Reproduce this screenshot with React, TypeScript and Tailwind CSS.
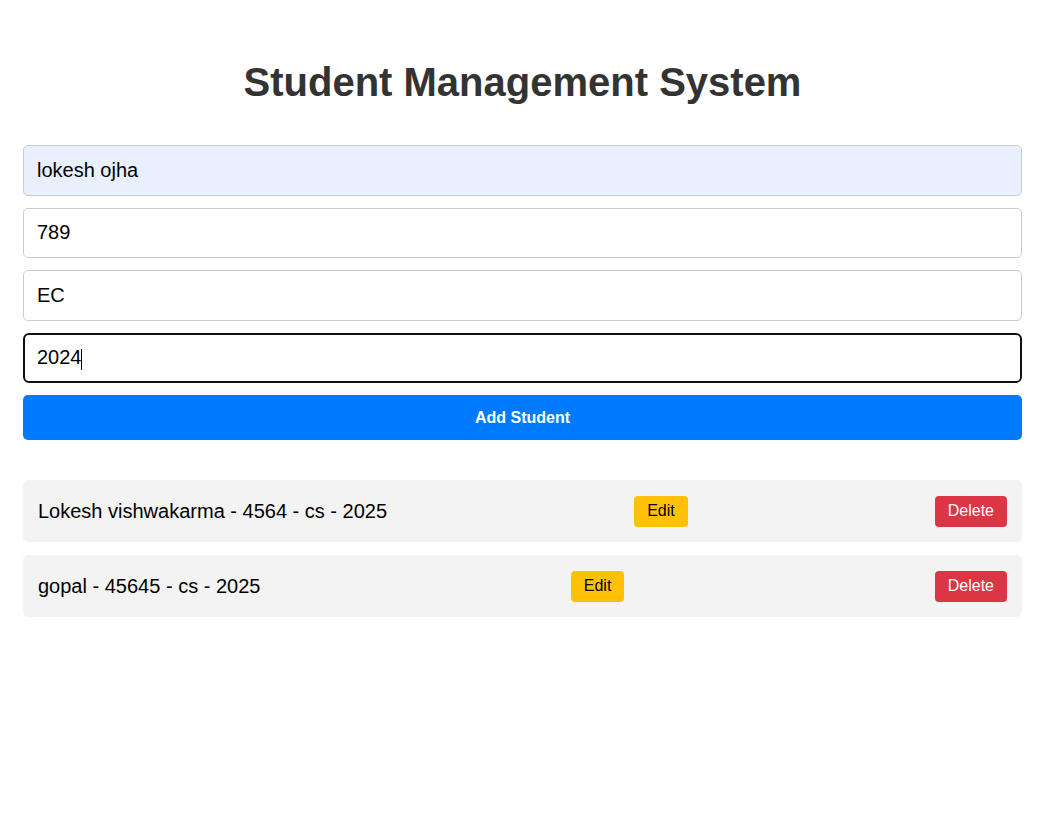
import { useState } from 'react';

interface Student {
  name: string;
  roll: string;
  branch: string;
  year: string;
}

const STUDENTS: Student[] = [
  { name: 'Lokesh vishwakarma', roll: '4564', branch: 'cs', year: '2025' },
  { name: 'gopal', roll: '45645', branch: 'cs', year: '2025' },
];

export default function App() {
  const [name, setName] = useState('lokesh ojha');
  const [roll, setRoll] = useState('789');
  const [branch, setBranch] = useState('EC');
  const [year, setYear] = useState('2024');

  const inputBase =
    'w-full h-[50.5px] px-[13px] rounded-[5px] border border-[#cccccc] text-[20px] text-black outline-none';

  return (
    <div className="min-h-screen bg-white font-['Liberation_Sans',Arial,sans-serif]">
      <div className="ml-[23px] w-[999px] pt-[59px]">
        <h1 className="text-center text-[40px] leading-[46px] font-bold text-[#333333]">
          Student Management System
        </h1>

        <form className="mt-[40px] flex flex-col gap-[12px]" onSubmit={(e) => e.preventDefault()}>
          <input
            className={`${inputBase} bg-[#e8f0fe]`}
            value={name}
            onChange={(e) => setName(e.target.value)}
          />
          <input className={inputBase} value={roll} onChange={(e) => setRoll(e.target.value)} />
          <input className={inputBase} value={branch} onChange={(e) => setBranch(e.target.value)} />
          <div className="relative">
            <input
              className="w-full h-[50.5px] px-[12px] rounded-[6px] border-2 border-[#101010] text-[20px] text-black outline-none"
              value={year}
              onChange={(e) => setYear(e.target.value)}
            />
            {/* caret */}
            <span className="absolute left-[58px] top-[16px] h-[21px] w-px bg-black" />
          </div>
          <button
            type="submit"
            className="h-[45px] w-full rounded-[5px] bg-[#007bff] text-[16px] font-bold text-white"
          >
            Add Student
          </button>
        </form>

        <ul className="mt-[40px] flex flex-col gap-[13px]">
          {STUDENTS.map((s) => (
            <li
              key={s.roll}
              className="flex h-[62px] items-center justify-between rounded-[5px] bg-[#f3f3f3] px-[15px]"
            >
              <span className="text-[20px] text-black">
                {s.name} - {s.roll} - {s.branch} - {s.year}
              </span>
              <button className="h-[31px] rounded-[4px] bg-[#ffc107] px-[13px] text-[16px] text-black">
                Edit
              </button>
              <button className="h-[31px] rounded-[4px] bg-[#dc3545] px-[13px] text-[16px] text-white">
                Delete
              </button>
            </li>
          ))}
        </ul>
      </div>
    </div>
  );
}
